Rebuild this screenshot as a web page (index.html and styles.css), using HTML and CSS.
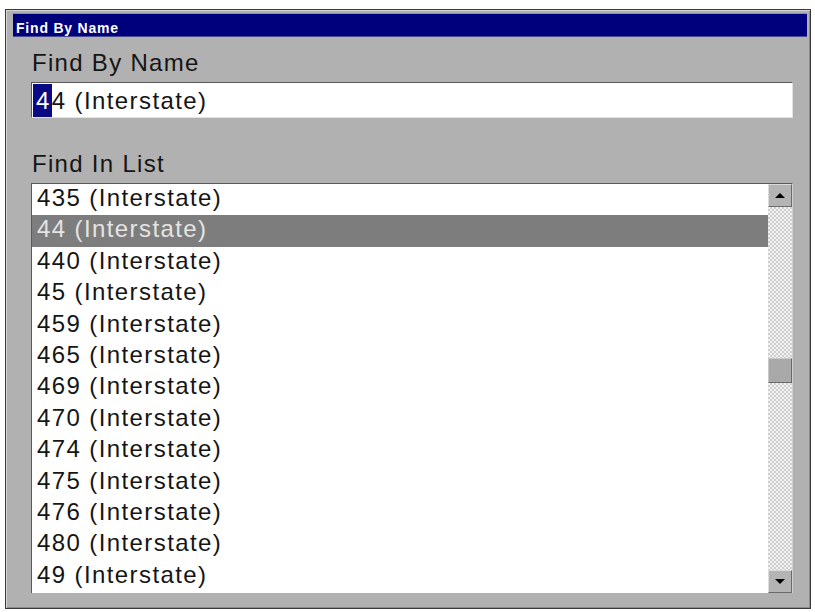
FILE: index.html
```html
<!DOCTYPE html>
<html lang="en">
<head>
    <meta charset="UTF-8">
    <meta name="viewport" content="width=device-width, initial-scale=1.0">
    <title>Find By Name</title>
    <link rel="stylesheet" href="styles.css">
</head>
<body>
    <div class="finestra">
        <div class="titolo">Find By Name</div>
        <div class="contenuto">
            <div class="etichetta">Find By Name</div>
            <div class="campo"><span class="sel">4</span><span>4 (Interstate)</span></div>

            <div class="etichetta etichettaLista">Find In List</div>
            <div class="lista">
                <ul class="voci">
                    <li>435 (Interstate)</li>
                    <li class="attiva">44 (Interstate)</li>
                    <li>440 (Interstate)</li>
                    <li>45 (Interstate)</li>
                    <li>459 (Interstate)</li>
                    <li>465 (Interstate)</li>
                    <li>469 (Interstate)</li>
                    <li>470 (Interstate)</li>
                    <li>474 (Interstate)</li>
                    <li>475 (Interstate)</li>
                    <li>476 (Interstate)</li>
                    <li>480 (Interstate)</li>
                    <li>49 (Interstate)</li>
                </ul>
                <div class="scrollbar">
                    <div class="freccia"><span class="triSu"></span></div>
                    <div class="binario"><div class="cursore"></div></div>
                    <div class="freccia"><span class="triGiu"></span></div>
                </div>
            </div>
        </div>
    </div>
</body>
</html>
```

FILE: styles.css
```css
body {
    margin: 0;
    padding: 9px 0 0 5px;
    background-color: #ffffff;
    font-family: "Liberation Sans", Arial, sans-serif;
}

.finestra {
    box-sizing: border-box;
    width: 806px;
    height: 600px;
    background-color: #b1b1b1;
    border: 1px solid #3a3a3a;
    box-shadow: inset 1px 1px #d6d6d6, inset -1px -1px #8a8a8a;
}

.titolo {
    margin: 3px 3px 0 7px;
    box-sizing: border-box;
    height: 24px;
    padding: 4px 0 0 3px;
    line-height: 20px;
    background-color: #00007c;
    border-top: 1px solid #8c8cbc;
    border-bottom: 1px solid #4a4a90;
    color: #ffffff;
    font-size: 14px;
    font-weight: bold;
    letter-spacing: 0.8px;
}

.contenuto {
    padding: 0 17px 0 25px;
}

.etichetta {
    margin-top: 13px;
    padding-left: 1px;
    font-size: 24px;
    line-height: 26px;
    letter-spacing: 1.3px;
    color: #151515;
}

.etichettaLista {
    margin-top: 33px;
}

.campo {
    display: flex;
    box-sizing: border-box;
    height: 36px;
    margin-top: 6px;
    padding: 1px 0 0 1px;
    background-color: #ffffff;
    border-top: 1px solid #5a5a5a;
    border-left: 1px solid #5a5a5a;
    border-right: 1px solid #e2e2e2;
    border-bottom: 1px solid #e2e2e2;
    font-size: 24px;
    line-height: 33px;
    letter-spacing: 1.4px;
    color: #151515;
}

.sel {
    padding: 0 1px 0 3px;
    background-color: #0a0a84;
    color: #ffffff;
}

.lista {
    display: flex;
    height: 410px;
    margin-top: 6px;
    background-color: #ffffff;
    border-top: 1px solid #5a5a5a;
    border-left: 1px solid #5a5a5a;
    border-right: 1px solid #d0d0d0;
    box-sizing: border-box;
}

.voci {
    flex: 1;
    list-style: none;
    margin: 0;
    padding: 0;
}

.voci li {
    height: 31.4px;
    box-sizing: border-box;
    padding: 0 0 3px 5px;
    font-size: 24px;
    line-height: 28.4px;
    letter-spacing: 1.4px;
    color: #151515;
}

.voci li.attiva {
    background-color: #7d7d7d;
    color: #e4e4e4;
}

.scrollbar {
    display: flex;
    flex-direction: column;
    width: 24px;
}

.freccia {
    display: flex;
    align-items: center;
    justify-content: center;
    box-sizing: border-box;
    height: 23px;
    background-color: #b4b4b4;
    border-top: 1px solid #dcdcdc;
    border-left: 1px solid #dcdcdc;
    border-right: 1px solid #6a6a6a;
    border-bottom: 1px solid #6a6a6a;
}

.triSu {
    width: 0;
    height: 0;
    border-left: 5px solid transparent;
    border-right: 5px solid transparent;
    border-bottom: 5px solid #000000;
}

.triGiu {
    width: 0;
    height: 0;
    border-left: 5px solid transparent;
    border-right: 5px solid transparent;
    border-top: 5px solid #000000;
}

/* binario retinato della barra di scorrimento */
.binario {
    flex: 1;
    background-color: #f0f0f0;
    background-image: conic-gradient(#cfcfcf 25%, transparent 0 50%, #cfcfcf 0 75%, transparent 0);
    background-size: 4px 4px;
}

.cursore {
    box-sizing: border-box;
    height: 25px;
    margin-top: 151px;
    background-color: #a9a9a9;
    border-top: 1px solid #c8c8c8;
    border-left: 1px solid #c8c8c8;
    border-right: 1px solid #6a6a6a;
    border-bottom: 1px solid #6a6a6a;
}
```
